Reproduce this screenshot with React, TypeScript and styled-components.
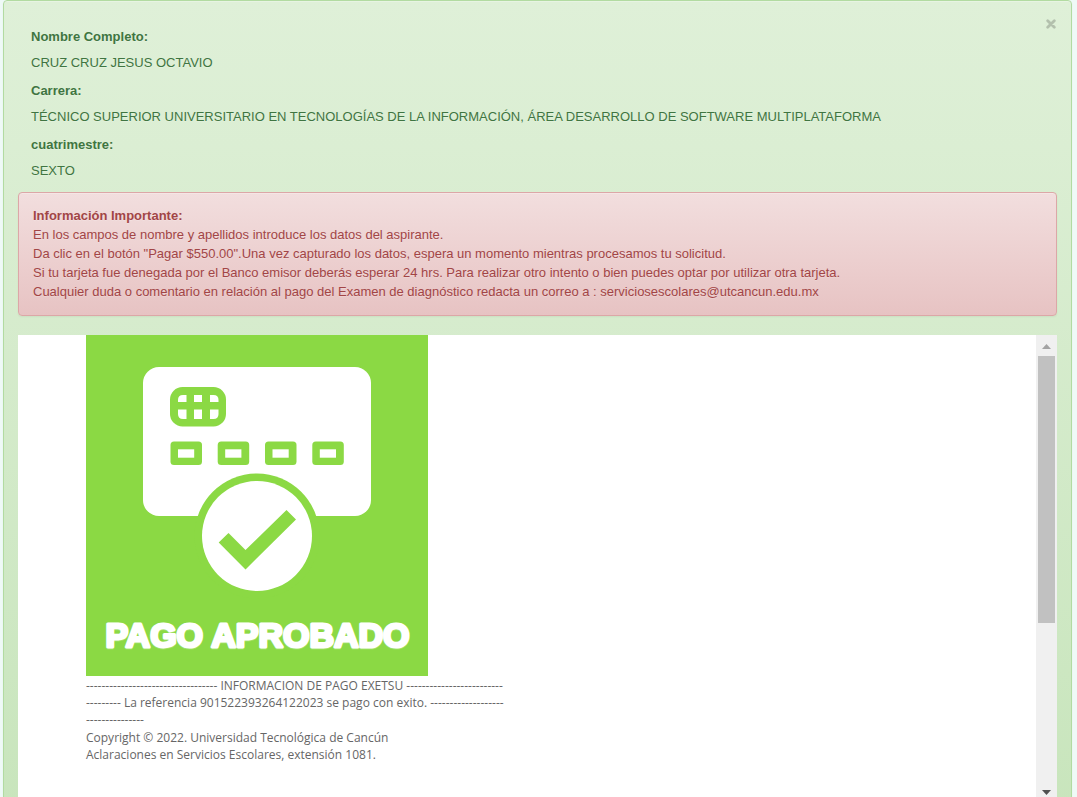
import React from "react";
import styled, { createGlobalStyle } from "styled-components";

const GlobalStyle = createGlobalStyle`
  *, *::before, *::after { box-sizing: border-box; }
  body {
    margin: 0;
    background: #effaf7;
    font-family: "Liberation Sans", Arial, sans-serif;
    font-size: 13px;
    line-height: 19px;
  }
`;

const Page = styled.main`
  height: 100vh;
  overflow: hidden;
  padding: 0 5px 0 3px;
`;

const Alert = styled.section<{ $tone: "success" | "danger" }>`
  border: 1px solid ${(p) => (p.$tone === "success" ? "#b2dba1" : "#dca7a7")};
  border-radius: 4px;
  color: ${(p) => (p.$tone === "success" ? "#3f7541" : "#a24546")};
  background: ${(p) =>
    p.$tone === "success"
      ? "linear-gradient(#dff0d8, #c8e5bc)"
      : "linear-gradient(#f2dede, #e7c3c3)"};
  box-shadow: inset 0 1px 0 rgba(255, 255, 255, 0.25), 0 1px 2px rgba(0, 0, 0, 0.05);
  text-shadow: 0 1px 0 rgba(255, 255, 255, 0.2);
`;

const Receipt = styled(Alert)`
  display: flex;
  flex-direction: column;
  padding: 14px;
`;

const Header = styled.header`
  display: flex;
  justify-content: space-between;
  align-items: flex-start;
`;

const Details = styled.dl`
  margin: 0;
  padding: 12px 13px;
`;

const Term = styled.dt`
  font-weight: 700;
  padding-bottom: 7px;
`;

const Value = styled.dd`
  margin: 0;
  padding-bottom: 9px;

  &:last-child {
    padding-bottom: 0;
  }
`;

const CloseButton = styled.button`
  display: flex;
  margin: 4px 0 0;
  padding: 0;
  border: 0;
  background: none;
  color: #b3c0ad;
  cursor: pointer;
`;

const Notice = styled(Alert)`
  padding: 13px 14px 14px;
`;

const NoticeText = styled.p`
  margin: 0;
`;

const Frame = styled.div`
  display: flex;
  height: 467px;
  margin-top: 19px;
  background: #fff;
`;

const FrameBody = styled.article`
  flex: 1;
  min-width: 0;
  padding-left: 68px;
  color: #666;
  font: 12px/17px "Open Sans", sans-serif;
`;

const Content = styled.div`
  max-width: 428px;
`;

const Banner = styled.svg`
  display: block;
  width: 342px;
  height: 341px;
`;

const Message = styled.p`
  margin: 1px 0 0;
`;

const ScrollBar = styled.div`
  display: flex;
  flex-direction: column;
  align-items: center;
  width: 21px;
  background: #f0f0f0;
`;

const ScrollArrow = styled.svg`
  display: block;
  width: 21px;
  height: 21px;
`;

const ScrollTrack = styled.div`
  flex: 1;
`;

const ScrollThumb = styled.div`
  width: 17px;
  height: 267px;
  background: #c1c1c1;
`;

const details = [
  ["Nombre Completo:", "CRUZ CRUZ JESUS OCTAVIO"],
  [
    "Carrera:",
    "TÉCNICO SUPERIOR UNIVERSITARIO EN TECNOLOGÍAS DE LA INFORMACIÓN, ÁREA DESARROLLO DE SOFTWARE MULTIPLATAFORMA",
  ],
  ["cuatrimestre:", "SEXTO"],
];

const notes = [
  "En los campos de nombre y apellidos introduce los datos del aspirante.",
  'Da clic en el botón "Pagar $550.00".Una vez capturado los datos, espera un momento mientras procesamos tu solicitud.',
  "Si tu tarjeta fue denegada por el Banco emisor deberás esperar 24 hrs. Para realizar otro intento o bien puedes optar por utilizar otra tarjeta.",
  "Cualquier duda o comentario en relación al pago del Examen de diagnóstico redacta un correo a : serviciosescolares@utcancun.edu.mx",
];

const GREEN = "#8bd944";

function ApprovedBanner() {
  return (
    <Banner viewBox="0 0 342 341" role="img" aria-label="Pago aprobado">
      <rect width="342" height="341" fill={GREEN} />
      <rect x="57" y="32" width="228" height="149" rx="16" fill="#fff" />
      <rect x="84" y="52" width="56" height="39.5" rx="12.5" fill={GREEN} />
      <g fill="#fff">
        <path d="M92 67V65Q92 60 97 60H100.500V67Z" />
        <path d="M108 60h8v7h-8z" />
        <path d="M124 60h3.500Q132.500 60 132.500 65V67H124Z" />
        <path d="M92 74.500h8.500V84H97Q92 84 92 79Z" />
        <path d="M108 74.500h8V84h-8z" />
        <path d="M124 74.500h8.500V79Q132.500 84 127.500 84H124Z" />
      </g>
      {[84.5, 131.7, 179, 226.3].map((x) => (
        <g key={x}>
          <rect x={x} y="106.500" width="31.500" height="23.500" rx="3.500" fill={GREEN} />
          <rect x={x + 7.5} y="114.300" width="16.200" height="8.400" fill="#fff" />
        </g>
      ))}
      <circle cx="171" cy="201" r="62.500" fill={GREEN} />
      <circle cx="171" cy="201" r="55" fill="#fff" />
      <path
        d="M132.700 207.500L142.500 198L159.500 215L200.500 175L210 184.500L159.500 234.500Z"
        fill={GREEN}
      />
      <text
        x="171.500"
        y="312"
        textAnchor="middle"
        fontFamily="Liberation Sans, Arial, sans-serif"
        fontWeight="700"
        fontSize="34"
        fill="#fff"
        stroke="#fff"
        strokeWidth="3"
        strokeLinejoin="round"
      >
        PAGO APROBADO
      </text>
    </Banner>
  );
}

export default function App() {
  return (
    <>
      <GlobalStyle />
      <Page>
        <Receipt $tone="success">
          <Header>
            <Details>
              {details.map(([term, value]) => (
                <React.Fragment key={term}>
                  <Term>{term}</Term>
                  <Value>{value}</Value>
                </React.Fragment>
              ))}
            </Details>
            <CloseButton type="button" aria-label="Cerrar">
              <svg width="12" height="10" viewBox="0 0 12 10" aria-hidden="true">
                <path
                  d="M2.700 1.700L9.300 8.300M9.300 1.700L2.700 8.300"
                  stroke="currentColor"
                  strokeWidth="2.800"
                  strokeLinecap="round"
                />
              </svg>
            </CloseButton>
          </Header>

          <Notice $tone="danger">
            <strong>Información Importante:</strong>
            {notes.map((note) => (
              <NoticeText key={note}>{note}</NoticeText>
            ))}
          </Notice>

          <Frame>
            <FrameBody>
              <Content>
                <ApprovedBanner />
                <Message>
                  {"-".repeat(34)} INFORMACION DE PAGO EXETSU {"-".repeat(25)}
                  <br />
                  {"-".repeat(9)} La referencia 901522393264122023 se pago con exito. {"-".repeat(19)}
                  <br />
                  {"-".repeat(15)}
                </Message>
                <Message>
                  Copyright © 2022. Universidad Tecnológica de Cancún
                  <br />
                  Aclaraciones en Servicios Escolares, extensión 1081.
                </Message>
              </Content>
            </FrameBody>
            <ScrollBar aria-hidden="true">
              <ScrollArrow viewBox="0 0 21 21">
                <path d="M6 14L10.500 9L15 14Z" fill="#a3a3a3" />
              </ScrollArrow>
              <ScrollTrack>
                <ScrollThumb />
              </ScrollTrack>
              <ScrollArrow viewBox="0 0 21 21">
                <path d="M6 9L10.500 14L15 9Z" fill="#505050" />
              </ScrollArrow>
            </ScrollBar>
          </Frame>
        </Receipt>
      </Page>
    </>
  );
}
